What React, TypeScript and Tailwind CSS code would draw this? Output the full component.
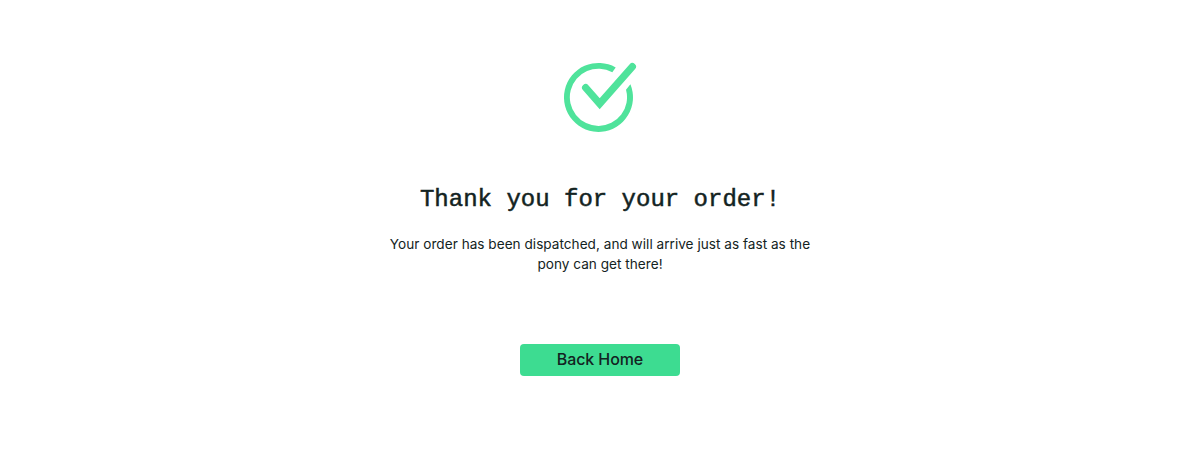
function OrderCheckIcon() {
  return (
    <svg width="80" height="76" viewBox="0 0 80 76" fill="none" aria-hidden="true">
      <path
        d="M55.7 7.5 A34.5 34.5 0 1 0 70.4 24.3 L66 29.7 A28.6 28.6 0 1 1 52.3 12.3 Z"
        fill="#4fe39b"
      />
      <path
        d="M25.6 27.6 L39.7 43.7 L72.4 6.6"
        stroke="#4fe39b"
        strokeWidth="7.2"
        strokeLinecap="round"
        strokeLinejoin="miter"
      />
    </svg>
  );
}

export default function App() {
  return (
    <main className="flex h-[476px] w-full flex-col items-center bg-white pt-[60px] text-[#132322]">
      <OrderCheckIcon />
      <h2 className="mt-12 font-['Liberation_Mono',monospace] text-2xl leading-8 font-normal whitespace-nowrap [-webkit-text-stroke:0.5px_#132322]">
        Thank you for your order!
      </h2>
      <p className="mt-[18px] w-[440px] text-center font-['Inter',sans-serif] text-[13.6px] leading-5 tracking-[0.02px]">
        Your order has been dispatched, and will arrive just as fast as the
        <br />
        pony can get there!
      </p>
      <button
        type="button"
        className="mt-[70px] h-8 w-40 rounded bg-[#3ddc91] pb-px font-['Inter',sans-serif] text-base leading-[31px] font-[450] tracking-[-0.1px]"
      >
        Back Home
      </button>
    </main>
  );
}
